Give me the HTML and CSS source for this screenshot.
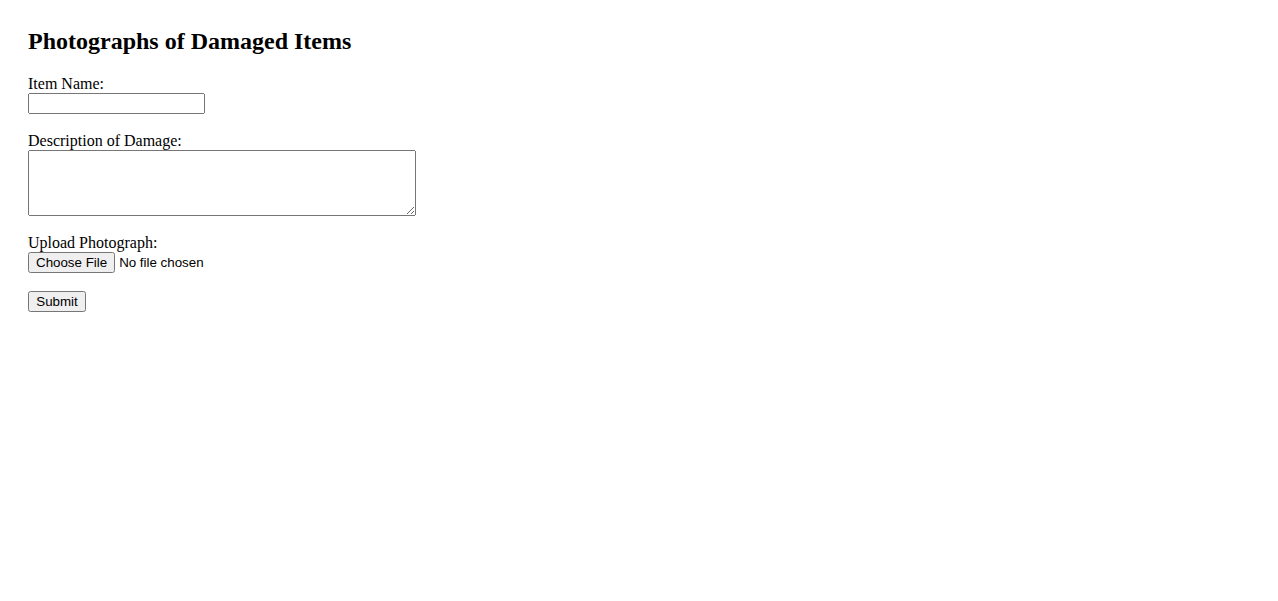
FILE: index.html
```html
<!DOCTYPE html>
<html lang="en">
<head>
<meta charset="utf-8">
<title>Photographs of Damaged Items</title>
<link rel="stylesheet" href="styles.css">
</head>
<body>
<main class="page">
  <h2 class="title">Photographs of Damaged Items</h2>
  <form class="form">
    <div class="field">
      <label class="label" for="item">Item Name:</label>
      <input class="text-input" type="text" id="item" name="item">
    </div>
    <div class="field">
      <label class="label" for="desc">Description of Damage:</label>
      <textarea class="textarea" id="desc" name="desc"></textarea>
    </div>
    <div class="field">
      <label class="label" for="photo">Upload Photograph:</label>
      <input class="file-input" type="file" id="photo" name="photo">
    </div>
    <div class="field">
      <button class="submit" type="submit">Submit</button>
    </div>
  </form>
</main>
</body>
</html>
```

FILE: styles.css
```css
html, body {
  margin: 0;
  padding: 0;
  background: #ffffff;
}

body {
  font-family: "Liberation Serif", "Times New Roman", serif;
  font-size: 16px;
  color: #000000;
}

.page {
  padding: 28px;
}

.title {
  margin: 0 0 20px 0;
  font-size: 24px;
  font-weight: bold;
  line-height: 27px;
}

.form {
  display: flex;
  flex-direction: column;
  align-items: flex-start;
  gap: 18px;
}

.field {
  display: flex;
  flex-direction: column;
  align-items: flex-start;
}

.label {
  display: block;
  height: 18px;
  line-height: 18px;
}

.text-input {
  box-sizing: border-box;
  width: 177px;
  height: 21px;
  margin: 0;
  font-family: "Liberation Sans", Arial, sans-serif;
  font-size: 13.33px;
}

.textarea {
  box-sizing: border-box;
  width: 388px;
  height: 66px;
  margin: 0;
  font-family: "Liberation Mono", monospace;
  font-size: 13.33px;
}

.file-input {
  margin: 0;
  height: 21px;
  font-family: "Liberation Sans", Arial, sans-serif;
  font-size: 13.33px;
}

.submit {
  box-sizing: border-box;
  width: 58px;
  margin: 0;
  height: 21px;
  font-family: "Liberation Sans", Arial, sans-serif;
  font-size: 13.33px;
}
```
